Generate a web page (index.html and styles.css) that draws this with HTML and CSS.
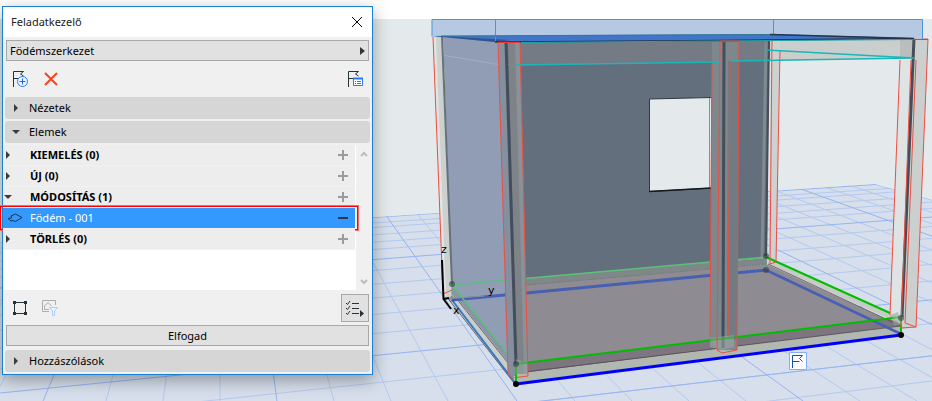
FILE: index.html
```html
<!DOCTYPE html>
<html lang="hu">
<head>
    <meta charset="UTF-8">
    <meta name="viewport" content="width=device-width, initial-scale=1.0">
    <title>Feladatkezelő</title>
    <link rel="stylesheet" href="styles.css">
</head>
<body>

    <main class="workspace">
        <svg class="scene" viewBox="0 0 932 401" aria-label="3D">
            <defs>
                <clipPath id="ground"><path d="M0 242L874 184L932 200V401H0z"/></clipPath>
            </defs>
            <path fill="#e4eaec" d="M0 19H932V401H0z"/>
            <path fill="#d6dfeb" d="M0 242L874 184L932 200V401H0z"/>

            <!-- ground grid -->
            <g clip-path="url(#ground)" fill="none" stroke="#b4c9ef" stroke-width="1">
                <path d="M4400 -47L0 248M4400 -47L0 253M4400 -47L0 261M4400 -47L0 269M4400 -47L0 277M4400 -47L0 300M4400 -47L0 315M4400 -47L0 330M4400 -47L0 348M4400 -47L0 369M4400 -47L0 423M4400 -47L0 464M4400 -47L0 496M4400 -47L0 540"/>
                <path d="M220 -20L-65 401M220 -20L-8 401M220 -20L106 401M220 -20L163 401M220 -20L220 401M220 -20L334 401M220 -20L391 401M220 -20L448 401M220 -20L575 401M220 -20L632 401M220 -20L689 401M220 -20L746 401M220 -20L860 401M220 -20L917 401M220 -20L974 401M220 -20L1031 401M220 -20L1150 401M220 -20L1210 401M220 -20L1270 401M220 -20L1330 401M220 -20L1450 401M220 -20L1510 401"/>
                <path stroke="#96b4f0" d="M4400 -47L0 242M4400 -47L0 288M4400 -47L0 393M4400 -47L0 464M220 -20L43 401M220 -20L277 401M220 -20L517 401M220 -20L803 401M220 -20L1090 401M220 -20L1390 401M874 184L932 200"/>
            </g>

            <!-- walls -->
            <path fill="#909db4" d="M443 37L498 42L516 364L452 285z"/>
            <path fill="#646f7d" d="M506 42L769 40L767 258L514 280z"/>
            <path fill="#747b85" d="M506 42L770 40V61L515 65z"/>
            <path fill="#cacfcd" d="M770 40L914 39V58L770 61z"/>
            <path fill="#babfbd" d="M900 39H914V58L900 59z"/>
            <path fill="none" stroke="#a2afba" d="M442 55L495 64L516 65"/>

            <!-- floor -->
            <path fill="#8f8b93" d="M514 285L766 264L901 326L516 374z"/>
            <path fill="#7f8888" d="M514 279L767 258V264L514 286z"/>
            <path fill="none" stroke="#76787a" stroke-dasharray="2 1" d="M516 286L767 264"/>
            <path fill="#7d7680" d="M516 364L901 317V326L516 374z"/>
            <path fill="#b0b8b0" d="M516 374L901 326V335L516 384z"/>
            <path fill="#c4ccc3" d="M766 257L901 318V324L768 264z"/>
            <path fill="#c8cec9" d="M446 296L452 290L516 372V384L512 380z"/>
            <path fill="none" stroke="#55484f" stroke-width=".8" d="M452 293L516 373L901 326L768 264M446 296L514 383"/>
            <path fill="#8994a9" d="M452 285L516 364V372L452 292z"/>

            <!-- window opening -->
            <path fill="#e4eaec" stroke="#33383e" d="M649.500 99L712 97.500V188L649.500 191.500z"/>
            <path fill="none" stroke="#889095" d="M709.500 98V187"/>
            <path fill="none" stroke="#15181c" stroke-width="1.500" d="M649 191.500L712 188"/>

            <!-- back columns -->
            <path fill="#ccd1cf" d="M433 37H443L452 285V300L443 296z"/>
            <path fill="#e0e4e3" d="M433 37H436L446 296H443z"/>
            <path fill="none" stroke="#67717a" stroke-width="2" d="M442 36L452 284"/>
            <path fill="#cdd2d0" d="M771 41H780L776 263H769z"/>
            <path fill="none" stroke="#7f8a91" stroke-width="3" d="M766 42L762 258"/>
            <path fill="none" stroke="#444d58" stroke-width="2" d="M769 40L766 258"/>

            <!-- slab outline -->
            <g fill="none" stroke-width="3" stroke="#4860b4">
                <path d="M452 300L766 270"/>
                <path stroke-width="2.500" d="M766 270L901 334"/>
                <path stroke="#3978c4" stroke-width="2" d="M452 300L516 384"/>
                <path stroke="#0000fa" d="M516 384L901 335"/>
            </g>
            <g fill="none" stroke="#00bd00" stroke-width="2">
                <path stroke="#5bc178" stroke-width="1.500" d="M516 364L452 285L766 257"/>
                <path d="M766 257L901 318M516 364L901 317"/>
                <path d="M516 364V384M901 317V334"/>
            </g>
            <path fill="none" stroke="#64a184" d="M452 285V300M766 257V270"/>

            <!-- front columns -->
            <path fill="#8490a0" d="M498 42H507L517 374L512 378L508 374z"/>
            <path fill="#7d8388" d="M508 42H520L528 374L517 374z"/>
            <path fill="#8a9197" d="M515 42H520L528 374H524z"/>
            <path fill="#7e878c" d="M712 42H739L737 350H717L710 338z"/>
            <path fill="#737b82" d="M728 61H739L737 340H727z"/>
            <path fill="#dee4e3" d="M900 60H911L902 325L890 315z"/>
            <path fill="#cbd0cf" d="M914 39H928L916 327L902 329z"/>
            <path fill="none" stroke="#444d5a" stroke-width="3" d="M506 42L516 364M724 41L723 348M914 38L902 317"/>
            <path fill="#9ba7a4" fill-opacity=".6" d="M516 359L528 364V374H516zM710 338L734 335V347L722 350L710 347zM890 315L898 312L902 325H894z"/>
            <path fill="none" stroke="#00bd00" stroke-opacity=".5" stroke-width="2" d="M516 364L528 362.500M710 340L737 337M516 366V382M890 318L901 317V332"/>

            <g fill="none" stroke="#ef4d43">
                <path d="M433 37L443 294L452 290"/>
                <path d="M498 42L508 372L512 378L528 376L520 42z"/>
                <path d="M712 61L710 336M720 41L717 350L722 353L737 350L739 41z"/>
                <path d="M730 61L728 336"/>
                <path d="M772 41L770 264L776 262L780 50"/>
                <path d="M900 60L890 315M911 60L901 328L916 327L928 39H911M916 60L905 323L916 327"/>
            </g>
            <g fill="none" stroke="#1cb6b8" stroke-width="1.500">
                <path d="M515 65L720 62M731 61L914 58L766 50"/>
            </g>

            <!-- roof slab -->
            <path fill="#b5c9e3" d="M432 19.500H922.500V39L770 34L441 36H432z"/>
            <path fill="#4175c9" d="M432 36L770 34L914 38L720 41L495 42z"/>
            <path fill="#30568f" d="M432 36L441 36L510 40L495 42z"/>
            <path fill="none" stroke="#4a94dc" d="M432 36.500V19.500H922.500V39M495.500 20V42M773.500 20V34"/>
            <path fill="none" stroke="#347693" d="M441 36L770 34.500"/>
            <path fill="none" stroke="#24344e" stroke-width="1.500" d="M770 34.500L914 38.500L720 40.500L495 42"/>
            <path fill="none" stroke="#21a5a8" d="M521 42.500L911 39.500"/>
            <path fill="none" stroke="#ee3830" d="M498 42.500H520M720 41H739M911 39.500H928"/>

            <!-- nodes -->
            <circle cx="516" cy="384" r="3"/>
            <circle cx="901" cy="335" r="3"/>
            <g fill="#303c40" fill-opacity=".6">
                <circle cx="452" cy="284" r="3"/>
                <circle cx="452" cy="299" r="3" fill-opacity=".3"/>
                <circle cx="516" cy="364" r="3"/>
                <circle cx="766" cy="256" r="3"/>
                <circle cx="766" cy="270" r="3"/>
                <circle cx="901" cy="318" r="3"/>
            </g>

            <!-- axes -->
            <path fill="none" stroke="#8b9198" d="M444 299L484 296"/>
            <path fill="none" stroke="#000" stroke-width="2" d="M442 260L443.500 299L451 309M443 299L449 298"/>
            <text class="axis" x="441" y="253">z</text>
            <text class="axis" x="488" y="294">y</text>
            <text class="axis" x="453" y="314">x</text>

            <!-- task marker -->
            <path fill="#fafcff" stroke="#85aef5" d="M789.500 352.500H806.500V369.500H789.500z"/>
            <path fill="none" stroke="#1c4f9e" d="M792.500 368V355.500H802.500L799.500 358.500L802.500 361.500M792.500 361.500H799.500"/>
        </svg>

        <section class="panel">
            <header class="titlebar">
                <h1>Feladatkezelő</h1>
                <button class="close" aria-label="Bezárás">
                    <svg width="12" height="12"><path d="M1 1L11 11M11 1L1 11" stroke="#000"/></svg>
                </button>
            </header>

            <div class="select-box">
                <select aria-label="Feladat">
                    <option>Födémszerkezet</option>
                </select>
                <svg class="select-arrow" width="5" height="8"><path d="M0 0L5 4L0 8z" fill="#333"/></svg>
            </div>

            <div class="toolbar">
                <button class="tool" aria-label="Új feladat">
                    <svg width="18" height="18" fill="none">
                        <path d="M1.500 17V1.500H11.500L8.500 4L11.500 6M1.500 8.500H6" stroke="#263238"/>
                        <circle cx="10.500" cy="11.500" r="5" fill="#eef5ff" stroke="#2b7cf0"/>
                        <path d="M7.500 11.500H13.500M10.500 8.500V14.500" stroke="#1769ee"/>
                    </svg>
                </button>
                <button class="tool" aria-label="Törlés">
                    <svg width="18" height="18"><path d="M3 3L15 15M15 3L3 15" stroke="#fb421b" stroke-width="2"/></svg>
                </button>
                <button class="tool last" aria-label="Feladat adatai">
                    <svg width="18" height="18" fill="none">
                        <path d="M1.500 17V1.500H11.500L8.500 4L11.500 6M1.500 8.500H6" stroke="#263238"/>
                        <path d="M6.500 8.500H15.500V15.500H6.500z" fill="#fff" stroke="#2878fa"/>
                        <path d="M6 8.500H16" stroke="#2878fa" stroke-width="2"/>
                        <path d="M8 11.500H9M10 11.500H14M8 13.500H9M10 13.500H14" stroke="#2878fa"/>
                    </svg>
                </button>
            </div>

            <button class="section-head"><svg class="arrow" viewBox="0 0 8 8"><path d="M2 0L6 4L2 8z"/></svg>Nézetek</button>
            <button class="section-head"><svg class="arrow" viewBox="0 0 8 8"><path d="M0 2H8L4 6z"/></svg>Elemek</button>

            <div class="elements">
                <ul class="list">
                    <li class="row">
                        <svg class="arrow" viewBox="0 0 8 8"><path d="M2 0L6 4L2 8z"/></svg>
                        <span>KIEMELÉS (0)</span>
                        <button class="add" aria-label="Hozzáadás"><svg width="12" height="12"><path d="M1 6H11M6 1V11" stroke="#999c9e" stroke-width="2"/></svg></button>
                    </li>
                    <li class="row">
                        <svg class="arrow" viewBox="0 0 8 8"><path d="M2 0L6 4L2 8z"/></svg>
                        <span>ÚJ (0)</span>
                        <button class="add" aria-label="Hozzáadás"><svg width="12" height="12"><path d="M1 6H11M6 1V11" stroke="#999c9e" stroke-width="2"/></svg></button>
                    </li>
                    <li class="row">
                        <svg class="arrow" viewBox="0 0 8 8"><path d="M0 2H8L4 6z"/></svg>
                        <span>MÓDOSÍTÁS (1)</span>
                        <button class="add" aria-label="Hozzáadás"><svg width="12" height="12"><path d="M1 6H11M6 1V11" stroke="#999c9e" stroke-width="2"/></svg></button>
                    </li>
                    <li class="row selected">
                        <svg class="slab-icon" width="16" height="10" fill="none"><path d="M1 5.500L4.500 5L4 3L8.500 1L15 4.500L8.500 8.500L6 7.500L4 8z" stroke="#173652"/></svg>
                        <span>Födém - 001</span>
                        <button class="add" aria-label="Eltávolítás"><svg width="12" height="12"><path d="M1 6H11" stroke="#22384e" stroke-width="2"/></svg></button>
                    </li>
                    <li class="row">
                        <svg class="arrow" viewBox="0 0 8 8"><path d="M2 0L6 4L2 8z"/></svg>
                        <span>TÖRLÉS (0)</span>
                        <button class="add" aria-label="Hozzáadás"><svg width="12" height="12"><path d="M1 6H11M6 1V11" stroke="#999c9e" stroke-width="2"/></svg></button>
                    </li>
                </ul>
                <div class="scrollbar">
                    <svg width="8" height="6" fill="none"><path d="M1 5L4 2L7 5" stroke="#bcbcbc" stroke-width="2"/></svg>
                    <svg width="8" height="6" fill="none"><path d="M1 1L4 4L7 1" stroke="#bcbcbc" stroke-width="2"/></svg>
                </div>
            </div>

            <div class="actions">
                <button class="tool" aria-label="Kijelölés">
                    <svg width="18" height="18">
                        <path d="M3.500 3.500H14.500V14.500H3.500z" fill="none" stroke="#263238"/>
                        <path d="M2 2H5V5H2zM13 2H16V5H13zM2 13H5V16H2zM13 13H16V16H13z" fill="#263238"/>
                    </svg>
                </button>
                <button class="tool" aria-label="Szűrés" disabled>
                    <svg width="18" height="18" fill="none">
                        <path d="M8 12.500H1.500V1.500H14.500V6M3.500 10.500V7L7 3.500L10.500 7M3.500 10.500H8" stroke="#a9afb0"/>
                        <path d="M8.500 8.500H16.500L13.500 12V16.500H11.500V12z" fill="#eef5ff" stroke="#abcdf8"/>
                    </svg>
                </button>
                <button class="options" aria-label="Beállítások">
                    <svg width="20" height="18" fill="none">
                        <path d="M1 4L2.500 5.500L5 2M1 9L2.500 10.500L5 7M1 14L2.500 15.500L5 12M7 4.500H14M7 9.500H14M7 14.500H14" stroke="#263238"/>
                        <path d="M15 11L19 14.500L15 18z" fill="#263238"/>
                    </svg>
                </button>
            </div>

            <button class="accept">Elfogad</button>
            <button class="section-head"><svg class="arrow" viewBox="0 0 8 8"><path d="M2 0L6 4L2 8z"/></svg>Hozzászólások</button>
        </section>
    </main>

</body>
</html>
```
FILE: styles.css
```css
* {
    box-sizing: border-box;
}
body {
    margin: 0;
    background-color: #fff;
    font-family: "Noto Sans", "Open Sans", sans-serif;
    font-size: 11px;
    line-height: 16px;
    color: #000;
}
button, select {
    font: inherit;
    color: inherit;
    border: none;
    margin: 0;
    padding: 0;
    background: none;
}
svg {
    display: block;
    flex: none;
}
.workspace {
    position: relative;
    overflow: hidden;
}
.scene {
    width: 100%;
}
.axis {
    font-family: "DejaVu Sans", sans-serif;
    font-size: 11px;
}

/* floating palette */
.panel {
    position: absolute;
    left: 2px;
    top: 6px;
    width: 371px;
    background-color: #f0f0f0;
    border: 1px solid #1a80d2;
    box-shadow: 0 5px 16px rgba(0, 0, 0, 0.35);
}
.titlebar {
    display: flex;
    align-items: center;
    justify-content: space-between;
    height: 30px;
    padding: 0 9px 0 8px;
    background-color: #fff;
}
.titlebar h1 {
    margin: 0;
    font-size: 11px;
    font-weight: normal;
    color: #222;
}
.select-box {
    display: grid;
    align-items: center;
    margin: 3px 3px 0;
    height: 21px;
    border: 1px solid #a8a8a8;
    background-color: #e1e1e1;
}
.select-box select {
    grid-area: 1 / 1;
    appearance: none;
    width: 100%;
    height: 19px;
    padding-left: 3px;
}
.select-arrow {
    grid-area: 1 / 1;
    justify-self: end;
    margin-right: 3px;
    pointer-events: none;
}
.toolbar {
    display: flex;
    gap: 12px;
    height: 36px;
    padding: 9px 7px 9px 9px;
}
.toolbar .last {
    margin-left: auto;
}
.section-head {
    display: flex;
    align-items: center;
    gap: 9px;
    width: calc(100% - 4px);
    height: 22px;
    margin: 0 2px 2px;
    padding: 0 7px;
    background-color: #d6d6d6;
    border-radius: 3px;
}
.arrow {
    width: 8px;
    height: 8px;
    fill: #3c3c3c;
}

/* element list */
.elements {
    display: flex;
    height: 145px;
}
.list {
    flex: 1;
    margin: 0;
    padding: 0;
    list-style: none;
    background-color: #fff;
}
.row {
    position: relative;
    display: flex;
    align-items: center;
    gap: 18px;
    height: 21px;
    margin-right: 1px;
    padding: 0 6px 0 1px;
    background-color: #ededed;
    border-bottom: 1px solid #f1f1f1;
    font-weight: bold;
}
.row .add {
    margin-left: auto;
}
.row.selected {
    gap: 7px;
    padding-left: 4px;
    background-color: #3399ff;
    color: #fff;
    font-weight: normal;
}
.row.selected::after {
    content: "";
    position: absolute;
    inset: -2px -3px;
    border: 1px solid #f00;
    box-shadow: 0 0 0 1px #f66;
}
.scrollbar {
    display: flex;
    flex-direction: column;
    justify-content: space-between;
    align-items: center;
    width: 16px;
    padding: 6px 0 5px;
}

.actions {
    display: flex;
    align-items: center;
    gap: 12px;
    height: 35px;
    padding: 0 3px 0 8px;
}
.options {
    display: flex;
    align-items: center;
    justify-content: center;
    width: 28px;
    height: 28px;
    margin-left: auto;
    border: 1px solid #a8a8a8;
    background-color: #e1e1e1;
}
.accept {
    display: block;
    width: calc(100% - 6px);
    height: 21px;
    margin: 0 3px 4px;
    border: 1px solid #a8a8a8;
    background-color: #e1e1e1;
}
```
